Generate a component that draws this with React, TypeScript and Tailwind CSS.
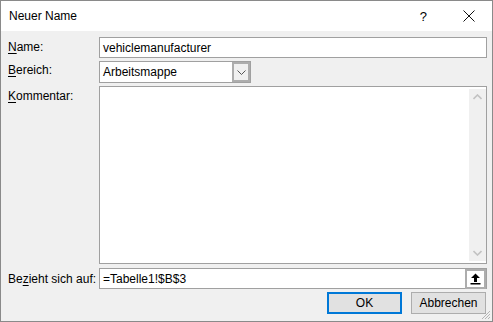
export default function App() {
  return (
    <div className="relative w-[493px] h-[322px] border border-[#8a8a8a] bg-[#f0f0f0] flex flex-col font-['Liberation_Sans',Arial,sans-serif] text-[12px] text-black overflow-hidden">
      {/* Titelleiste */}
      <div className="h-[30px] bg-white flex items-center pl-[8px] shrink-0">
        <span className="text-[12px] text-black">Neuer Name</span>
        <span className="ml-auto mr-[36px] text-[13px] leading-none">?</span>
        <svg width="12" height="12" viewBox="0 0 12 12" className="mr-[17px]">
          <path d="M0.5 0.5 L11.5 11.5 M11.5 0.5 L0.5 11.5" stroke="#111" strokeWidth="1" />
        </svg>
      </div>

      <div className="flex-1 flex flex-col pt-[6px] pr-[5px]">
        {/* Name */}
        <div className="flex h-[21px]">
          <div className="w-[98px] pl-[7px] pt-[1px]">
            <span className="underline underline-offset-2">N</span>ame:
          </div>
          <div className="flex-1 bg-white border border-[#a0a0a0] flex items-center pl-[3px]">
            vehiclemanufacturer
          </div>
        </div>

        {/* Bereich */}
        <div className="flex h-[22px] mt-[3px]">
          <div className="w-[98px] pl-[7px] pt-[0px]">
            <span className="underline underline-offset-2">B</span>ereich:
          </div>
          <div className="w-[152px] bg-white border border-[#a0a0a0] flex items-center">
            <span className="pl-[3px] flex-1">Arbeitsmappe</span>
            <div className="w-[18px] h-full border-2 border-[#adadad] bg-[#f0f0f0] flex items-center justify-center">
              <svg width="9" height="5" viewBox="0 0 9 5">
                <path d="M0.5 0.5 L4.5 4.5 L8.5 0.5" stroke="#555" strokeWidth="1" fill="none" />
              </svg>
            </div>
          </div>
        </div>

        {/* Kommentar */}
        <div className="flex h-[178px] mt-[3px]">
          <div className="w-[98px] pl-[7px] pt-[1px]">
            <span className="underline underline-offset-2">K</span>ommentar:
          </div>
          <div className="flex-1 bg-white border border-[#a0a0a0] flex justify-end py-[2px]">
            <div className="w-[17px] h-full bg-[#f0f0f0] flex flex-col justify-between items-center py-[5px]">
              <svg width="9" height="6" viewBox="0 0 9 6">
                <path d="M0.5 5 L4.5 1 L8.5 5" stroke="#c2c2c2" strokeWidth="1.6" fill="none" />
              </svg>
              <svg width="9" height="6" viewBox="0 0 9 6">
                <path d="M0.5 1 L4.5 5 L8.5 1" stroke="#c2c2c2" strokeWidth="1.6" fill="none" />
              </svg>
            </div>
          </div>
        </div>

        {/* Bezieht sich auf */}
        <div className="flex h-[21px] mt-[4px] items-center">
          <div className="w-[98px] pl-[7px]">
            Be<span className="underline underline-offset-2">z</span>ieht sich auf:
          </div>
          <div className="flex-1 h-full bg-white border border-[#a0a0a0] flex items-center">
            <span className="pl-[3px] flex-1">=Tabelle1!$B$3</span>
            <div className="w-[21px] h-[20px] border-2 border-[#adadad] bg-white flex items-center justify-center">
              <svg width="11" height="12" viewBox="0 0 11 12">
                <path d="M5.5 0.5 L10 5 L7 5 L7 9 L4 9 L4 5 L1 5 Z" fill="#000" />
                <rect x="0.5" y="10" width="10" height="1.5" fill="#000" />
              </svg>
            </div>
          </div>
        </div>

        {/* Buttons */}
        <div className="flex justify-end gap-[9px] mt-[3px] pr-[1px]">
          <button className="w-[75px] h-[22px] bg-[#e1e1e1] border-2 border-[#0078d7] text-[12px] flex items-center justify-center">
            OK
          </button>
          <button className="w-[75px] h-[22px] bg-[#e1e1e1] border border-[#adadad] text-[12px] flex items-center justify-center">
            Abbrechen
          </button>
        </div>
      </div>

      {/* Größenänderungsgriff */}
      <svg width="10" height="10" viewBox="0 0 10 10" className="absolute right-[1px] bottom-[1px]">
        <path d="M9 1 L1 9 M9 4 L4 9 M9 7 L7 9" stroke="#b5b5b5" strokeWidth="1" />
      </svg>
    </div>
  );
}
